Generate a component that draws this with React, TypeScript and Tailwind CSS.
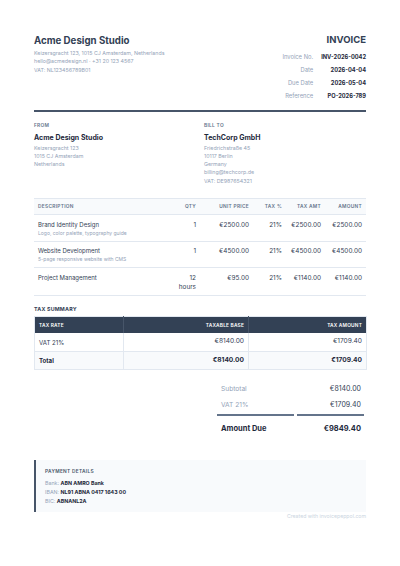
import React from "react";

const items = [
  { name: "Brand Identity Design", sub: "Logo, color palette, typography guide", qty: "1", unit: "", price: "€2500.00", tax: "21%", taxAmt: "€2500.00", amount: "€2500.00" },
  { name: "Website Development", sub: "5-page responsive website with CMS", qty: "1", unit: "", price: "€4500.00", tax: "21%", taxAmt: "€4500.00", amount: "€4500.00" },
  { name: "Project Management", sub: "", qty: "12", unit: "hours", price: "€95.00", tax: "21%", taxAmt: "€1140.00", amount: "€1140.00" },
];

const meta = [
  ["Invoice No.", "INV-2026-0042"],
  ["Date", "2026-04-04"],
  ["Due Date", "2026-05-04"],
  ["Reference", "PO-2026-789"],
];

export default function App() {
  return (
    <div className="min-h-[566px] w-full bg-white px-[34px] pt-[35px] font-['Inter',sans-serif] text-[#334155]">
      {/* Header */}
      <div className="flex items-start justify-between">
        <div>
          <div className="text-[9.7px] font-bold leading-[12px] text-[#334155]">Acme Design Studio</div>
          <div className="mt-[2px] text-[5.3px] leading-[8.3px] text-[#94a3b8]">
            <div>Keizersgracht 123, 1015 CJ Amsterdam, Netherlands</div>
            <div>hello@acmedesign.nl · +31 20 123 4567</div>
            <div>VAT: NL123456789B01</div>
          </div>
        </div>
        <div className="-mt-[1px] flex flex-col items-end">
          <div className="text-[9.5px] font-bold leading-[12px] text-[#334155]">INVOICE</div>
          <div className="mt-[4.5px] grid grid-cols-[auto_auto] gap-x-[8px]">
            {meta.map(([k, v]) => (
              <React.Fragment key={k}>
                <div className="flex h-[13px] items-center justify-end text-[5.8px] text-[#94a3b8]">{k}</div>
                <div className="flex h-[13px] items-center justify-end text-[5.7px] font-bold text-[#1e293b]">{v}</div>
              </React.Fragment>
            ))}
          </div>
        </div>
      </div>

      <div className="mt-[7px] h-[2px] bg-[#475569]" />

      {/* Parties */}
      <div className="mt-[10.5px] grid grid-cols-2 gap-x-[8px]">
        <div>
          <div className="text-[4.8px] font-semibold uppercase leading-[6px] tracking-[0.3px] text-[#64748b]">From</div>
          <div className="mt-[4.5px] text-[7px] font-bold leading-[9px] text-[#1e293b]">Acme Design Studio</div>
          <div className="mt-[2px] text-[5.3px] leading-[8.3px] text-[#94a3b8]">
            <div>Keizersgracht 123</div>
            <div>1015 CJ Amsterdam</div>
            <div>Netherlands</div>
          </div>
        </div>
        <div>
          <div className="text-[4.8px] font-semibold uppercase leading-[6px] tracking-[0.3px] text-[#64748b]">Bill To</div>
          <div className="mt-[4.5px] text-[7px] font-bold leading-[9px] text-[#1e293b]">TechCorp GmbH</div>
          <div className="mt-[2px] text-[5.3px] leading-[8.3px] text-[#94a3b8]">
            <div>Friedrichstraße 45</div>
            <div>10117 Berlin</div>
            <div>Germany</div>
            <div>billing@techcorp.de</div>
            <div>VAT: DE987654321</div>
          </div>
        </div>
      </div>

      {/* Items */}
      <table className="mt-[13.5px] w-full table-fixed border-collapse">
        <colgroup>
          <col className="w-[136px]" />
          <col className="w-[30px]" />
          <col className="w-[53px]" />
          <col className="w-[33px]" />
          <col className="w-[39px]" />
          <col className="w-[41px]" />
        </colgroup>
        <thead>
          <tr className="h-[16px] border-y border-[#e2e8f0] bg-[#f8fafc] text-[4.8px] font-semibold uppercase tracking-[0.3px] text-[#64748b]">
            <th className="px-[4px] text-left font-semibold">Description</th>
            <th className="px-[4px] text-right font-semibold">Qty</th>
            <th className="px-[4px] text-right font-semibold">Unit Price</th>
            <th className="px-[4px] text-right font-semibold">Tax %</th>
            <th className="px-[4px] text-right font-semibold">Tax Amt</th>
            <th className="px-[4px] text-right font-semibold">Amount</th>
          </tr>
        </thead>
        <tbody>
          {items.map((it) => (
            <tr key={it.name} className="border-b border-[#e2e8f0] align-top text-[6.4px] leading-[8px] text-[#334155]">
              <td className="px-[4px] pb-[4px] pt-[5.5px] text-[6px]">
                <div>{it.name}</div>
                {it.sub ? <div className="mt-[1px] text-[5px] leading-[7px] text-[#94a3b8]">{it.sub}</div> : <div className="h-[8px]" />}
              </td>
              <td className="px-[4px] pb-[4px] pt-[5.5px] text-right">
                <div>{it.qty}</div>
                {it.unit ? <div className="mt-[1px]">{it.unit}</div> : null}
              </td>
              <td className="px-[4px] pb-[4px] pt-[5.5px] text-right">{it.price}</td>
              <td className="px-[4px] pb-[4px] pt-[5.5px] text-right">{it.tax}</td>
              <td className="px-[4px] pb-[4px] pt-[5.5px] text-right">{it.taxAmt}</td>
              <td className="px-[4px] pb-[4px] pt-[5.5px] text-right">{it.amount}</td>
            </tr>
          ))}
        </tbody>
      </table>

      {/* Tax summary */}
      <div className="mt-[10px] text-[5.3px] font-bold uppercase leading-[6px] tracking-[0.2px] text-[#334155]">Tax Summary</div>
      <table className="mt-[4.5px] w-full table-fixed border-collapse border border-[#e2e8f0]">
        <colgroup>
          <col className="w-[89px]" />
          <col className="w-[125px]" />
          <col className="w-[118px]" />
        </colgroup>
        <thead>
          <tr className="h-[16.5px] bg-[#334155] text-[4.8px] uppercase tracking-[0.2px] text-white">
            <th className="border-r border-[#475569] px-[4px] text-left font-semibold">Tax Rate</th>
            <th className="border-r border-[#475569] px-[4px] text-right font-semibold">Taxable Base</th>
            <th className="px-[4px] text-right font-semibold">Tax Amount</th>
          </tr>
        </thead>
        <tbody className="text-[6.6px] text-[#334155]">
          <tr className="h-[18px] border-b border-[#e2e8f0]">
            <td className="border-r border-[#e2e8f0] px-[4px] text-[6.1px]">VAT 21%</td>
            <td className="border-r border-[#e2e8f0] px-[4px] text-right">€8140.00</td>
            <td className="px-[4px] text-right">€1709.40</td>
          </tr>
          <tr className="h-[18px] bg-[#f8fafc] font-bold text-[#1e293b]">
            <td className="border-r border-[#e2e8f0] px-[4px] text-[6.1px]">Total</td>
            <td className="border-r border-[#e2e8f0] px-[4px] text-right">€8140.00</td>
            <td className="px-[4px] text-right">€1709.40</td>
          </tr>
        </tbody>
      </table>

      {/* Totals */}
      <div className="ml-auto mr-[2px] mt-[12px] grid w-[147px] grid-cols-[77px_67px] gap-x-[3px]">
        <div className="flex h-[15px] items-center pl-[4px] text-[6.6px] text-[#94a3b8]">Subtotal</div>
        <div className="flex h-[15px] items-center justify-end pr-[3px] text-[7px] text-[#334155]">€8140.00</div>
        <div className="flex h-[19.5px] items-center border-b-2 border-[#64748b] pl-[4px] text-[6.6px] text-[#94a3b8]">VAT 21%</div>
        <div className="flex h-[19.5px] items-center justify-end border-b-2 border-[#64748b] pr-[3px] text-[7px] text-[#334155]">€1709.40</div>
        <div className="flex h-[24px] items-center pl-[4px] text-[7.5px] font-bold text-[#1e293b]">Amount Due</div>
        <div className="flex h-[24px] items-center justify-end pr-[3px] text-[7.5px] font-bold text-[#1e293b]">€9849.40</div>
      </div>

      {/* Payment details */}
      <div className="mt-[20px] border-l-2 border-[#475569] bg-[#f8fafc] pb-[5px] pl-[9px] pt-[8px]">
        <div className="text-[4.8px] font-semibold uppercase leading-[6px] tracking-[0.3px] text-[#475569]">Payment Details</div>
        <div className="mt-[4.4px] text-[5.3px] leading-[9.3px] text-[#94a3b8]">
          <div>
            Bank: <span className="font-bold text-[#1e293b]">ABN AMRO Bank</span>
          </div>
          <div>
            IBAN: <span className="font-bold text-[#1e293b]">NL91 ABNA 0417 1643 00</span>
          </div>
          <div>
            BIC: <span className="font-bold text-[#1e293b]">ABNANL2A</span>
          </div>
        </div>
      </div>
      <div className="mt-[1px] text-right text-[5.2px] leading-[6px] text-[#cbd5e1]">Created with invoicepeppol.com</div>
    </div>
  );
}
